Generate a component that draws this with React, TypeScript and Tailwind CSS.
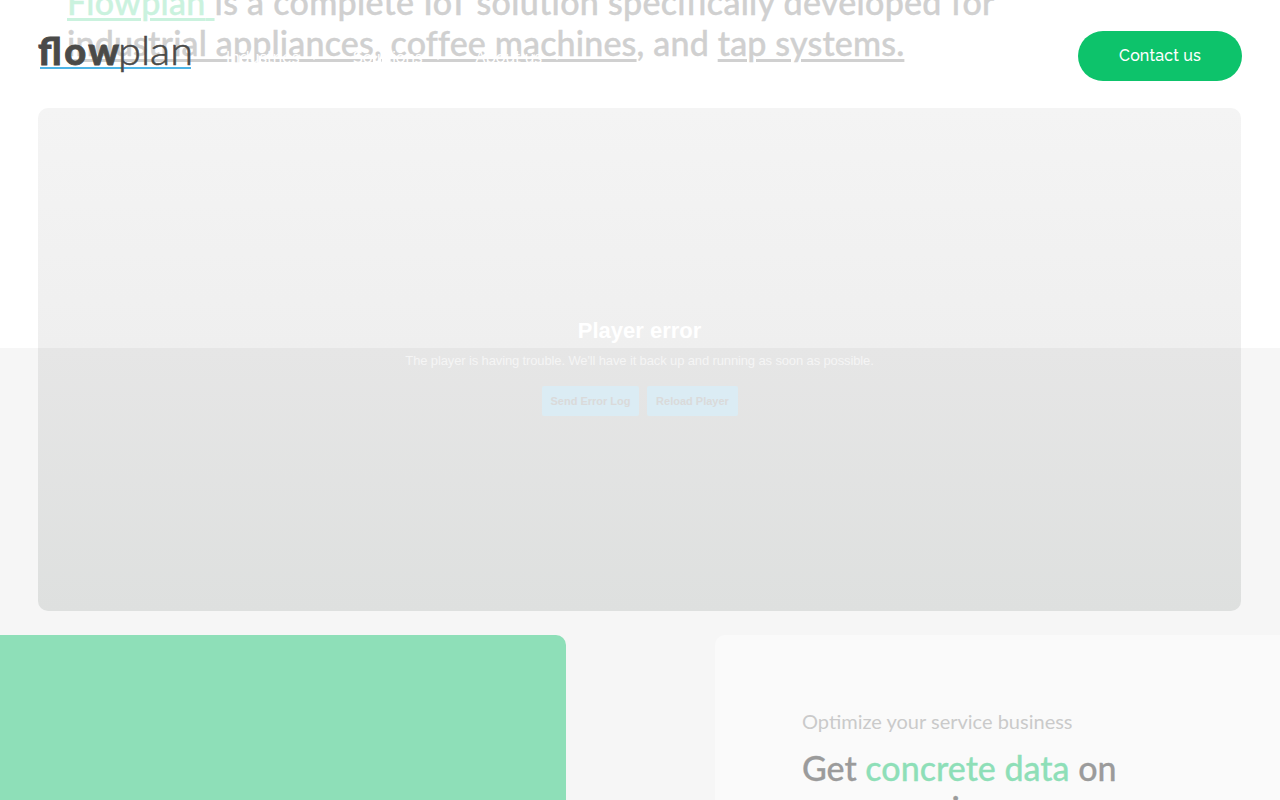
import React from "react";

const navItems = [
  { label: "Industries", className: "w-[127px]" },
  { label: "Solutions", className: "w-[122px]" },
  { label: "About us", className: "w-[163px]" },
];

function Logo() {
  return (
    <svg
      width="156"
      height="48"
      viewBox="0 0 156 48"
      aria-label="flowplan"
      className="overflow-visible"
    >
      <rect x="2" y="35" width="151" height="2" fill="#4db4e6" />
      <text
        x="0"
        y="33"
        fontFamily="Lato, sans-serif"
        fontSize="38"
        fontWeight="900"
        fill="#4a4a48"
        stroke="#4a4a48"
        strokeWidth="0.8"
        fontVariantLigatures="none"
        textLength="81"
      >
        flow
      </text>
      <text
        x="80"
        y="33"
        fontFamily="Lato, sans-serif"
        fontSize="40"
        fontWeight="300"
        fill="#4a4a48"
        stroke="#4a4a48"
        strokeWidth="0.6"
        textLength="75"
        lengthAdjust="spacingAndGlyphs"
      >
        plan
      </text>
    </svg>
  );
}

function Header() {
  return (
    <header className="absolute inset-x-0 top-0 z-10 flex h-28 items-center px-[38px]">
      <a href="#" className="w-[188px]">
        <Logo />
      </a>
      <nav className="flex flex-1 pt-[3px] font-['Raleway','Lato',sans-serif] text-base font-medium text-white">
        {navItems.map((item) => (
          <a
            key={item.label}
            href="#"
            className={`flex items-center gap-[11px] ${item.className}`}
          >
            {item.label}
            <svg width="8" height="6" viewBox="0 0 8 6" fill="none">
              <path d="M1 1l3 3 3-3" stroke="white" strokeWidth="1.5" />
            </svg>
          </a>
        ))}
      </nav>
      <a
        href="#"
        className="flex h-[50px] w-[164px] items-center justify-center rounded-full bg-[#0dc36b] font-['Raleway','Lato',sans-serif] text-base font-medium tracking-[0.15px] text-white"
      >
        Contact us
      </a>
    </header>
  );
}

function Intro() {
  return (
    <section className="h-[108px] overflow-hidden pl-[67px]">
      <h2 className="-mt-[19px] whitespace-nowrap font-['Lato',sans-serif] text-[34px] font-medium leading-[41px] text-[#d0d0d0] [-webkit-text-stroke:0.4px]">
        <span className="block tracking-[0.3px]">
          <a
            href="#"
            className="text-[#caf2de] underline decoration-[3px] underline-offset-[3px]"
          >
            Flowplan{" "}
          </a>
          is a complete IoT solution specifically developed for
        </span>
        <span className="block tracking-[0.17px]">
          <a
            href="#"
            className="underline decoration-[3px] underline-offset-[3px]"
          >
            industrial appliances,
          </a>{" "}
          <a
            href="#"
            className="underline decoration-[3px] underline-offset-[3px]"
          >
            coffee machines
          </a>
          , and{" "}
          <a
            href="#"
            className="underline decoration-[3px] underline-offset-[3px]"
          >
            tap systems.
          </a>
        </span>
      </h2>
    </section>
  );
}

function Player() {
  return (
    <section className="ml-[38px] flex h-[503px] w-[1203px] flex-col items-center rounded-[10px] bg-[linear-gradient(180deg,#f4f4f4_0px,#efefef_240px,#e6e6e6_240px,#dee0df_503px)] pt-[209px] font-['Liberation_Sans',sans-serif]">
      <h3 className="text-[22px] font-bold leading-[28px] text-white">
        Player error
      </h3>
      <p className="mt-[7px] whitespace-nowrap text-[13px] leading-[18px] tracking-[-0.13px] text-[#f5f5f5]">
        The player is having trouble. We'll have it back up and running as soon
        as possible.
      </p>
      <div className="mt-4 flex gap-2 pl-px text-[11px] font-bold text-[#dadada]">
        <button className="h-[30px] w-[97px] rounded-xs bg-[#dbecf4]">
          Send Error Log
        </button>
        <button className="h-[30px] w-[91px] rounded-xs bg-[#dbecf4]">
          Reload Player
        </button>
      </div>
    </section>
  );
}

function ServiceSection() {
  return (
    <section className="mt-6 flex h-[165px] justify-between">
      <div className="w-[566px] rounded-tr-[10px] bg-[#8edfb8]" />
      <div className="h-[165px] w-[565px] overflow-hidden rounded-tl-[10px] bg-[#fafafa] pl-[87px] pt-[72px] font-['Lato',sans-serif]">
        <p className="text-[20px] leading-[28px] text-[#cacaca]">
          Optimize your service business
        </p>
        <h2 className="mt-[12px] whitespace-nowrap text-[34px] font-medium leading-[41px] text-[#9b9b9b] [-webkit-text-stroke:0.3px]">
          Get <span className="text-[#8edfb8]">concrete data</span> on
          <span className="block tracking-[1.2px]">your service</span>
        </h2>
      </div>
    </section>
  );
}

export default function App() {
  return (
    <div className="relative h-[800px] w-[1280px] overflow-hidden bg-[linear-gradient(180deg,#ffffff_348px,#f6f6f6_348px)]">
      <Header />
      <Intro />
      <Player />
      <ServiceSection />
    </div>
  );
}
